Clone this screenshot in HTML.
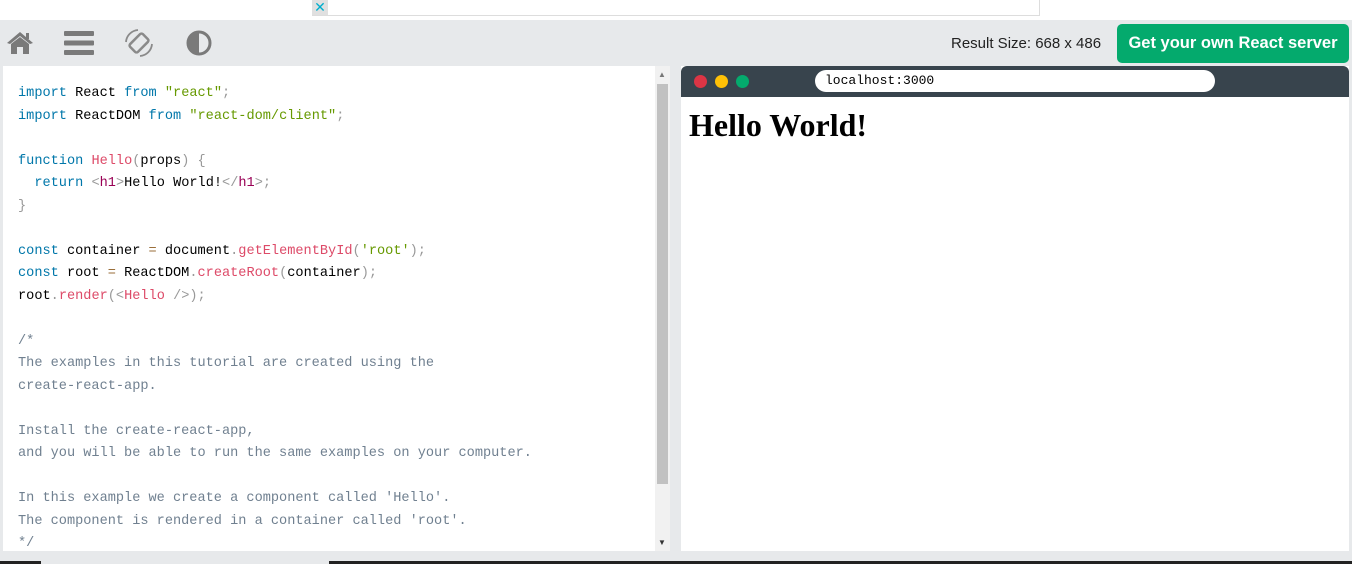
<!DOCTYPE html>
<html><head><meta charset="utf-8"><style>
*{margin:0;padding:0;box-sizing:border-box}
body{width:1352px;height:564px;background:#e7e9eb;position:relative;overflow:hidden;font-family:"Liberation Sans",sans-serif}
.top{position:absolute;left:0;top:0;width:1352px;height:20px;background:#fff}
.ad{position:absolute;left:312px;top:0;width:728px;height:16px;border:1px solid #ddd;border-top:none;background:#fff}
.adx{position:absolute;left:312px;top:0;width:16px;height:15px;background:#e0e0e0;color:#00aecd;font-size:14px;line-height:15px;text-align:center}
.code{position:absolute;left:3px;top:66px;width:667px;height:485px;background:#fff;overflow:hidden}
pre{position:absolute;left:15px;top:17px;font-family:"Liberation Mono",monospace;font-size:13.6px;line-height:22.5px;color:#000}
.k{color:#07a}.s{color:#690}.f{color:#dd4a68}.p{color:#999}.t{color:#905}.c{color:#708090}.o{color:#9a6e3a}
.sb{position:absolute;left:655px;top:66px;width:15px;height:485px;background:#f1f1f1}
.thumb{position:absolute;left:657px;top:84px;width:11px;height:400px;background:#c1c1c1}
.res{position:absolute;left:681px;top:66px;width:668px;height:485px;background:#fff}
.bar{position:absolute;left:0;top:0;width:668px;height:31px;background:#38444d;border-radius:6px 6px 0 0}
.dot{position:absolute;top:9px;width:13px;height:13px;border-radius:50%}
.url{position:absolute;left:134px;top:4px;width:400px;height:22px;background:#fff;border-radius:11px;font-family:"Liberation Mono",monospace;font-size:13px;line-height:22px;padding-left:10px}
h1{position:absolute;left:8px;top:41px;font-family:"Liberation Serif",serif;font-size:32px;font-weight:bold}
.rs{position:absolute;left:951px;top:35px;font-size:15px;color:#222}
.btn{position:absolute;left:1117px;top:24px;width:232px;height:39px;background:#04aa6d;border-radius:5px;color:#fff;font-weight:bold;font-size:16.5px;line-height:39px;text-align:center}
.bot{position:absolute;left:0;top:561px;width:1352px;height:3px;background:#222}
</style></head><body>
<div class="top"></div><div class="ad"></div><div class="adx">✕</div>
<svg style="position:absolute;left:6px;top:30px" width="28" height="26" viewBox="0 0 28 26"><path d="M14 2 L1 13 L4 14 L14 6 L24 14 L27 13 Z M5 14 V24 H11 V17 H17 V24 H23 V14 L14 7 Z" fill="#7a7a7a"/><rect x="20" y="3" width="3" height="6" fill="#7a7a7a"/></svg>
<svg style="position:absolute;left:64px;top:30px" width="30" height="26"><rect x="0" y="1" width="30" height="5" rx="1" fill="#7a7a7a"/><rect x="0" y="10.5" width="30" height="5" rx="1" fill="#7a7a7a"/><rect x="0" y="20" width="30" height="5" rx="1" fill="#7a7a7a"/></svg>
<svg style="position:absolute;left:124px;top:28px" width="30" height="30" viewBox="0 0 30 30"><rect x="9.5" y="6" width="11" height="18" rx="2" transform="rotate(45 15 15)" fill="none" stroke="#8a8a8a" stroke-width="2.5"/><path d="M2 14 A13 13 0 0 1 14 2" fill="none" stroke="#8a8a8a" stroke-width="1.8"/><path d="M28 16 A13 13 0 0 1 16 28" fill="none" stroke="#8a8a8a" stroke-width="1.8"/></svg>
<svg style="position:absolute;left:186px;top:30px" width="26" height="26"><circle cx="13" cy="13" r="11" fill="none" stroke="#7a7a7a" stroke-width="3"/><path d="M13 2 A11 11 0 0 0 13 24 Z" fill="#7a7a7a"/></svg>
<div class="rs">Result Size: 668 x 486</div>
<div class="btn">Get your own React server</div>
<div class="code"><pre><span class="k">import</span> React <span class="k">from</span> <span class="s">"react"</span><span class="p">;</span>
<span class="k">import</span> ReactDOM <span class="k">from</span> <span class="s">"react-dom/client"</span><span class="p">;</span>

<span class="k">function</span> <span class="f">Hello</span><span class="p">(</span>props<span class="p">)</span> <span class="p">{</span>
  <span class="k">return</span> <span class="p">&lt;</span><span class="t">h1</span><span class="p">&gt;</span>Hello World!<span class="p">&lt;/</span><span class="t">h1</span><span class="p">&gt;;</span>
<span class="p">}</span>

<span class="k">const</span> container <span class="o">=</span> document<span class="p">.</span><span class="f">getElementById</span><span class="p">(</span><span class="s">'root'</span><span class="p">);</span>
<span class="k">const</span> root <span class="o">=</span> ReactDOM<span class="p">.</span><span class="f">createRoot</span><span class="p">(</span>container<span class="p">);</span>
root<span class="p">.</span><span class="f">render</span><span class="p">(&lt;</span><span class="f">Hello</span> <span class="p">/&gt;);</span>

<span class="c">/*
The examples in this tutorial are created using the
create-react-app.

Install the create-react-app,
and you will be able to run the same examples on your computer.

In this example we create a component called 'Hello'.
The component is rendered in a container called 'root'.
*/</span></pre></div>
<div class="sb"></div><div class="thumb"></div>
<div style="position:absolute;left:658px;top:70px;font-size:8px;color:#777">▲</div>
<div style="position:absolute;left:658px;top:538px;font-size:8px;color:#333">▼</div>
<div class="res"><div class="bar">
<div class="dot" style="left:13px;background:#dc3545"></div>
<div class="dot" style="left:34px;background:#ffc107"></div>
<div class="dot" style="left:55px;background:#04aa6d"></div>
<div class="url">localhost:3000</div></div>
<h1>Hello World!</h1></div>
<div class="bot"></div>
<div style="position:absolute;left:41px;top:561px;width:288px;height:3px;background:#e7e9eb"></div>
</body></html>
